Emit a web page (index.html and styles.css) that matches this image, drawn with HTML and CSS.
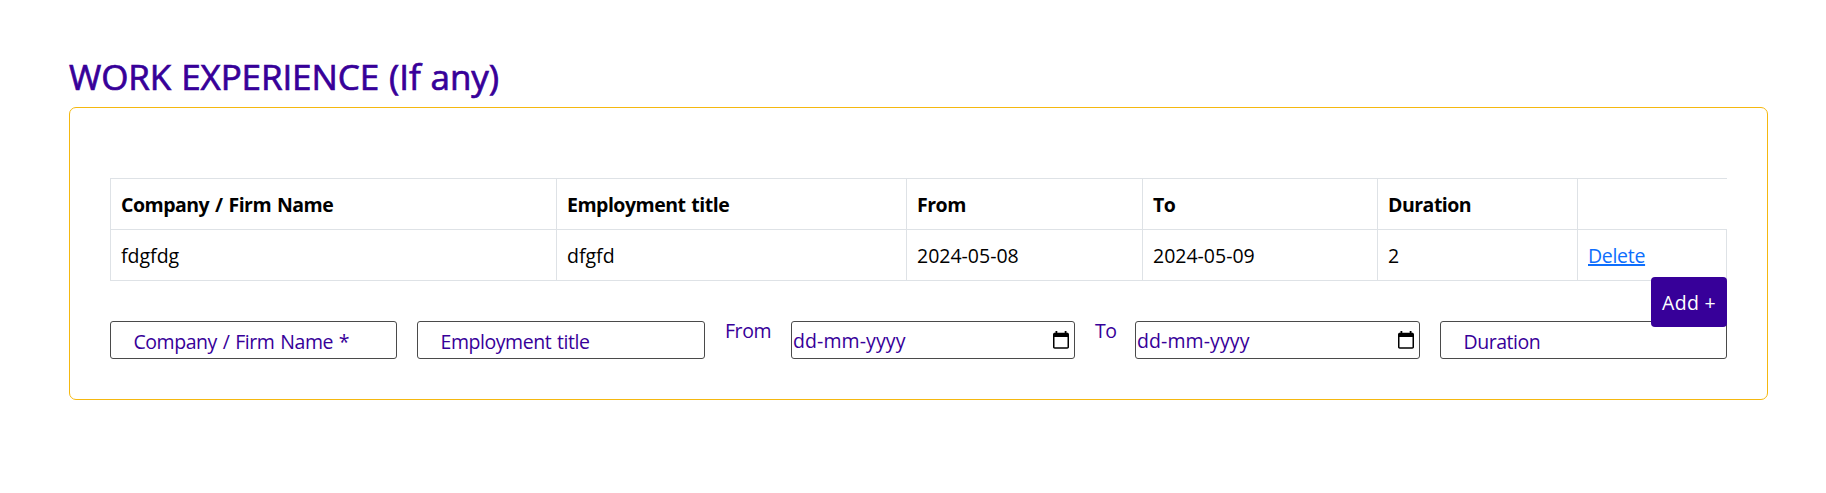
FILE: index.html
```
<!DOCTYPE html>
<html lang="en">
<head>
<meta charset="utf-8">
<title>Work Experience</title>
<link rel="stylesheet" href="styles.css">
</head>
<body>
<main class="section">
  <h2 class="title">WORK EXPERIENCE (If any)</h2>
  <section class="panel">
    <div class="table">
      <div class="row head">
        <div class="cell">Company / Firm Name</div>
        <div class="cell">Employment title</div>
        <div class="cell">From</div>
        <div class="cell">To</div>
        <div class="cell">Duration</div>
        <div class="cell blank"></div>
      </div>
      <div class="row">
        <div class="cell">fdgfdg</div>
        <div class="cell">dfgfd</div>
        <div class="cell">2024-05-08</div>
        <div class="cell">2024-05-09</div>
        <div class="cell">2</div>
        <div class="cell"><a class="delete" href="#">Delete</a></div>
      </div>
    </div>
    <div class="form">
      <div class="field">Company / Firm Name *</div>
      <div class="field">Employment title</div>
      <div class="label">From</div>
      <div class="field date">dd-mm-yyyy<svg class="cal" viewBox="0 0 16 18"><path fill="#000" fill-rule="evenodd" d="M2.500 0h1.800v1.700h7.400V0h1.800v1.700h.7c1 0 1.800.7 1.800 1.700V16c0 1-.8 1.700-1.800 1.700H1.800C.8 17.700 0 17 0 16V3.400c0-1 .8-1.700 1.800-1.700h.7zM1.500 6v10.200h13V6z"/></svg></div>
      <div class="label">To</div>
      <div class="field date">dd-mm-yyyy<svg class="cal" viewBox="0 0 16 18"><path fill="#000" fill-rule="evenodd" d="M2.500 0h1.800v1.700h7.400V0h1.800v1.700h.7c1 0 1.800.7 1.800 1.700V16c0 1-.8 1.700-1.800 1.700H1.800C.8 17.700 0 17 0 16V3.400c0-1 .8-1.700 1.800-1.700h.7zM1.500 6v10.200h13V6z"/></svg></div>
      <div class="field">Duration</div>
      <button class="add" type="button">Add +</button>
    </div>
  </section>
</main>
</body>
</html>
```
FILE: styles.css
```
* { box-sizing: border-box; }
body {
  margin: 0;
  background: #fff;
  color: #000;
  font: 19.5px/30px "Open Sans", "Noto Sans", sans-serif;
}
.section { padding: 56px 58px 0 69px; }
.title {
  margin: 0 0 8px;
  height: 43px;
  color: #370099;
  font-size: 35px;
  line-height: 42px;
  font-weight: 500;
  letter-spacing: -0.1px;
  word-spacing: 1px;
  -webkit-text-stroke: 0.7px #370099;
}
.panel {
  height: 293px;
  padding: 70px 40px 0;
  border: 1px solid #f5b80f;
  border-radius: 7px;
}
.table { border-top: 1px solid #dee2e6; }
.row {
  display: grid;
  grid-template-columns: 447px 350px 236px 235px 200px 149px;
  height: 51px;
  border-bottom: 1px solid #dee2e6;
}
.cell { padding: 11px 0 0 10px; border-right: 1px solid #dee2e6; }
.cell:first-child { border-left: 1px solid #dee2e6; }
.cell.blank { border-right: 0; }
.head { font-weight: 700; letter-spacing: -0.5px; word-spacing: 1.3px; }
.delete {
  color: #0d6efd;
  letter-spacing: -0.3px;
  text-decoration: underline;
  text-decoration-thickness: 2px;
}
.form {
  position: relative;
  display: grid;
  grid-template-columns: 287px 288px 46px 284px 20px 285px 287px;
  column-gap: 20px;
  margin-top: 40px;
  color: #370099;
  letter-spacing: -0.45px;
  word-spacing: 1.2px;
}
.field {
  height: 38px;
  padding: 5px 0 0 22.5px;
  border: 1px solid #4a4a4a;
  border-radius: 3px;
}
.date {
  display: flex;
  justify-content: space-between;
  padding: 4px 5px 0 1px;
  letter-spacing: 0.1px;
}
.cal { width: 16px; height: 18px; margin-top: 5px; }
.label { margin-top: -5px; }
.add {
  position: absolute;
  top: -44px;
  right: 0;
  width: 76px;
  height: 50px;
  padding: 2px 0 0;
  border: 0;
  border-radius: 4px;
  background: #370099;
  color: #fff;
  font: inherit;
  letter-spacing: 0.3px;
}
```
